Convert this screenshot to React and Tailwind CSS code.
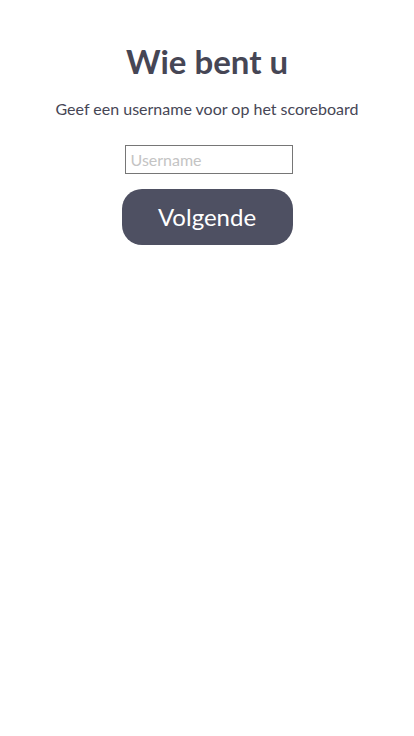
export default function App() {
  return (
    <div className="min-h-screen bg-white flex flex-col items-center pt-[40px] font-['Lato','Noto_Sans',sans-serif] text-[#464655]">
      <h1 className="text-[33px] font-bold leading-[42px]">Wie bent u</h1>
      <p className="mt-[16px] text-[16px] leading-[22px]">Geef een username voor op het scoreboard</p>
      <input
        type="text"
        placeholder="Username"
        className="mt-[25px] ml-[3px] w-[168px] h-[29px] border border-[#767676] px-[5px] text-[16px] outline-none placeholder:text-[#c4c4c4]"
      />
      <button className="mt-[15px] w-[171px] h-[56px] rounded-[20px] bg-[#4e5062] text-white text-[24px]">
        Volgende
      </button>
    </div>
  );
}
